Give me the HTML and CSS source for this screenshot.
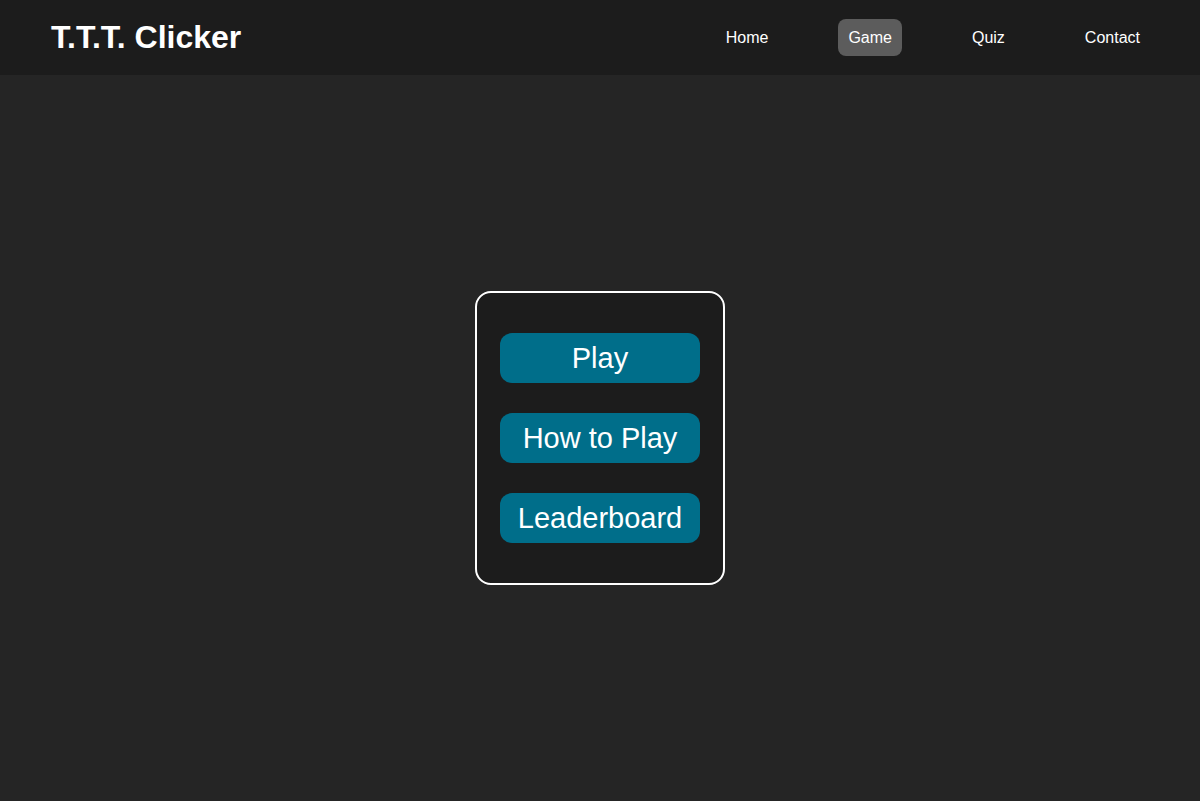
FILE: index.html
```html
<!DOCTYPE html>
<html lang="en">
<head>
<meta charset="utf-8">
<title>T.T.T. Clicker</title>
<link rel="stylesheet" href="styles.css">
</head>
<body>
<header class="header">
  <div class="logo">T.T.T. Clicker</div>
  <nav class="nav">
    <a class="nav-link" href="#">Home</a>
    <a class="nav-link active" href="#">Game</a>
    <a class="nav-link" href="#">Quiz</a>
    <a class="nav-link" href="#">Contact</a>
  </nav>
</header>
<main class="main">
  <div class="menu">
    <button class="menu-btn">Play</button>
    <button class="menu-btn">How to Play</button>
    <button class="menu-btn">Leaderboard</button>
  </div>
</main>
</body>
</html>
```
FILE: styles.css
```css
* { box-sizing: border-box; }
html, body { margin: 0; height: 100%; }
body {
  background: #252525;
  font-family: "Liberation Sans", Arial, sans-serif;
  color: #fff;
  display: flex;
  flex-direction: column;
}
.header {
  height: 75px;
  background: #1c1c1c;
  display: flex;
  align-items: center;
  justify-content: space-between;
  padding: 0 50px 0 51px;
  flex-shrink: 0;
}
.logo {
  font-size: 32px;
  font-weight: bold;
}
.nav {
  display: flex;
  gap: 60px;
  align-items: center;
}
.nav-link {
  color: #fff;
  text-decoration: none;
  font-size: 16px;
  padding: 10px 10px;
  line-height: 17px;
  border-radius: 8px;
}
.nav-link.active {
  background: #5c5c5c;
}
.main {
  flex: 1;
  display: flex;
  align-items: center;
  justify-content: center;
}
.menu {
  width: 250px;
  background: #1c1c1c;
  border: 2px solid #fff;
  border-radius: 16px;
  padding: 40px 23px;
  display: flex;
  flex-direction: column;
  gap: 30px;
}
.menu-btn {
  height: 50px;
  width: 200px;
  border: none;
  border-radius: 12px;
  background: #006e8a;
  color: #fff;
  font-family: "Liberation Sans", Arial, sans-serif;
  font-size: 29px;
  padding: 0;
  cursor: pointer;
}
```
